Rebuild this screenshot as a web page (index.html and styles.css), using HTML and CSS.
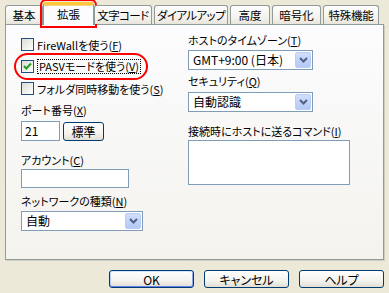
FILE: index.html
```html
<!DOCTYPE html>
<html lang="ja">
<head>
    <meta charset="UTF-8">
    <title>拡張</title>
    <link rel="stylesheet" href="styles.css">
</head>
<body>
    <div class="dialog">
        <!-- tab strip -->
        <div class="tabs">
            <div class="tab tab-basic">基本</div>
            <div class="tab tab-ext active">拡張</div>
            <div class="tab tab-code">文字コード</div>
            <div class="tab tab-dial">ダイアルアップ</div>
            <div class="tab tab-adv">高度</div>
            <div class="tab tab-enc">暗号化</div>
            <div class="tab tab-special">特殊機能</div>
        </div>

        <div class="panel">
            <div class="col col-left">
                <div class="check"><span class="box"></span><span>FireWallを使う(<u>F</u>)</span></div>
                <div class="check marked">
                    <span class="box">
                        <svg width="11" height="11" viewBox="0 0 11 11"><path d="M2 5 L4.3 7.5 L9 2.5" fill="none" stroke="#21a121" stroke-width="2"/></svg>
                    </span>
                    <span class="focus">PASVモードを使う(<u>V</u>)</span>
                </div>
                <div class="check"><span class="box"></span><span>フォルダ同時移動を使う(<u>S</u>)</span></div>

                <div class="label label-port">ポート番号(<u>X</u>)</div>
                <div class="port-row">
                    <div class="input input-port">21</div>
                    <div class="btn btn-small">標準</div>
                </div>

                <div class="label label-account">アカウント(<u>C</u>)</div>
                <div class="input input-account"></div>

                <div class="label label-net">ネットワークの種類(<u>N</u>)</div>
                <div class="select select-left">
                    <span>自動</span>
                    <span class="drop"><svg width="9" height="6" viewBox="0 0 9 6"><path d="M1 1 L4.5 4.5 L8 1" fill="none" stroke="#4d6185" stroke-width="2"/></svg></span>
                </div>
            </div>

            <div class="col col-right">
                <div class="label">ホストのタイムゾーン(<u>T</u>)</div>
                <div class="select">
                    <span>GMT+9:00 (日本)</span>
                    <span class="drop"><svg width="9" height="6" viewBox="0 0 9 6"><path d="M1 1 L4.5 4.5 L8 1" fill="none" stroke="#4d6185" stroke-width="2"/></svg></span>
                </div>

                <div class="label label-sec">セキュリティ(<u>Q</u>)</div>
                <div class="select">
                    <span>自動認識</span>
                    <span class="drop"><svg width="9" height="6" viewBox="0 0 9 6"><path d="M1 1 L4.5 4.5 L8 1" fill="none" stroke="#4d6185" stroke-width="2"/></svg></span>
                </div>

                <div class="label label-cmd">接続時にホストに送るコマンド(<u>I</u>)</div>
                <div class="input textarea"></div>
            </div>
        </div>

        <div class="buttons">
            <div class="btn btn-default">OK</div>
            <div class="btn">キャンセル</div>
            <div class="btn">ヘルプ</div>
        </div>
    </div>
</body>
</html>
```

FILE: styles.css
```css
* {
    margin: 0;
    padding: 0;
    box-sizing: border-box;
}

body {
    background: #ece9d8;
    font-family: "MS UI Gothic", "Noto Sans CJK JP", sans-serif;
    font-size: 11px;
    font-feature-settings: "palt";
    color: #000;
}

u {
    text-decoration: underline;
    text-underline-offset: 1px;
}

.dialog {
    width: 389px;
    height: 293px;
    padding-left: 5px;
}

/* tabs */
.tabs {
    display: flex;
    align-items: flex-end;
    gap: 2px;
    height: 25px;
    margin-bottom: -1px;
    position: relative;
    z-index: 1;
}

.tab {
    flex: none;
    height: 19px;
    margin-bottom: 1px;
    border: 1px solid #919b9c;
    border-bottom: none;
    border-radius: 3px 3px 0 0;
    background: linear-gradient(#fefefe, #f2f1ec 70%, #e6e4da);
    line-height: 18px;
    font-size: 11.5px;
    text-align: center;
    white-space: nowrap;
}

.tab-basic { width: 38px; }
.tab-ext { width: 47px; }
.tab-code { width: 58px; letter-spacing: -0.6px; }
.tab-dial { width: 74px; letter-spacing: -0.6px; }
.tab-adv { width: 40px; }
.tab-enc { width: 49px; }
.tab-special { width: 56px; letter-spacing: -0.3px; }

.tab.active {
    width: 51px;
    height: 23px;
    margin: 0 -2px 0 -2px;
    border-top: 3px solid #ffc83c;
    box-shadow: inset 0 1px 0 #f9d77e;
    background: #fcfcfe;
    line-height: 19px;
    outline: 2px solid #ff0000;
    outline-offset: 1px;
}

/* panel */
.panel {
    width: 379px;
    height: 236px;
    border: 1px solid #919b9c;
    background: linear-gradient(#fcfcfe, #f4f3ee);
    box-shadow: 1px 1px 0 #d0cebf;
    display: grid;
    grid-template-columns: 167px 1fr;
    padding-left: 15px;
}

.col-left {
    padding-top: 13px;
}

.col-right {
    padding-top: 9px;
}

.check {
    display: flex;
    align-items: center;
    gap: 3px;
    height: 13px;
    margin-bottom: 9px;
    white-space: nowrap;
}

.check.marked {
    width: max-content;
    outline: 2px solid #ff0000;
    outline-offset: 5px;
    border-radius: 7px;
}

.box {
    width: 13px;
    height: 13px;
    flex: none;
    border: 1px solid #1c5180;
    background: linear-gradient(135deg, #dcdcd7, #ffffff);
    display: flex;
    align-items: center;
    justify-content: center;
}

.focus {
    border: 1px dotted #000;
    padding: 0 1px;
    line-height: 13px;
}

.label {
    line-height: 13px;
    margin-bottom: 3px;
    white-space: nowrap;
}

.label-port {
    margin-top: 2px;
}

.label-account {
    margin-top: 13px;
    margin-bottom: 2px;
}

.label-net {
    margin-top: 7px;
}

.label-sec {
    margin-top: 5px;
    margin-bottom: 4px;
}

.label-cmd {
    margin-top: 13px;
    margin-bottom: 2px;
}

.input {
    border: 1px solid #7f9db9;
    background: #fff;
    padding-left: 3px;
}

.port-row {
    display: flex;
    align-items: center;
    gap: 3px;
}

.input-port {
    width: 39px;
    height: 20px;
    line-height: 18px;
    font-size: 12px;
}

.input-account {
    width: 108px;
    height: 19px;
}

.textarea {
    width: 162px;
    height: 45px;
}

.select {
    display: flex;
    align-items: stretch;
    width: 125px;
    height: 20px;
    border: 1px solid #7f9db9;
    background: #fff;
    padding: 1px;
    line-height: 16px;
    font-size: 12px;
}

.select > span:first-child {
    padding-left: 3px;
    flex: 1;
    white-space: nowrap;
}

.select-left {
    width: 122px;
}

.drop {
    width: 16px;
    flex: none;
    border: 1px solid #b9cdf7;
    border-radius: 2px;
    background: linear-gradient(#d2defa, #b4c9f6);
    display: flex;
    align-items: center;
    justify-content: center;
}

/* buttons */
.btn {
    width: 85px;
    height: 18px;
    border: 1px solid #003c74;
    border-radius: 3px;
    background: linear-gradient(#ffffff, #f4f3ee 60%, #e2dfd3);
    display: flex;
    align-items: center;
    justify-content: center;
    white-space: nowrap;
    font-size: 12px;
}

.btn-small {
    width: 41px;
    height: 19px;
    margin-top: 2px;
}

.btn-default {
    box-shadow: inset 0 1px 0 #cee7ff, inset 0 -1px 0 #6982ee, inset 1px 0 0 #b8d0f8, inset -1px 0 0 #8aa6ee;
}

.buttons {
    display: flex;
    justify-content: flex-end;
    gap: 10px;
    width: 379px;
    margin-top: 10px;
}
```
